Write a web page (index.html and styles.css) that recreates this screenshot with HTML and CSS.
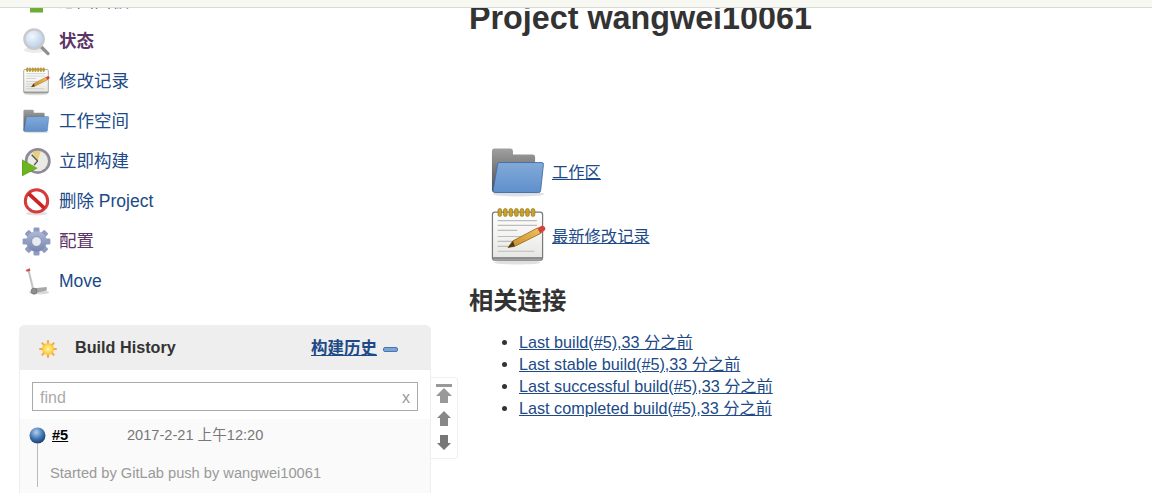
FILE: index.html
```html
<!DOCTYPE html>
<html lang="zh-CN">
<head>
<meta charset="utf-8">
<title>Project wangwei10061</title>
<link rel="stylesheet" href="styles.css">
</head>
<body>
<svg class="defs" width="0" height="0" aria-hidden="true">
  <defs>
    <linearGradient id="gFolderBack" x1="0" y1="0" x2="0" y2="1"><stop offset="0" stop-color="#a0a0a0"/><stop offset="1" stop-color="#4a4a4a"/></linearGradient>
    <linearGradient id="gFolderFront" x1="0" y1="0" x2="0" y2="1"><stop offset="0" stop-color="#82aad8"/><stop offset="1" stop-color="#5f8fcb"/></linearGradient>
    <linearGradient id="gPaper" x1="0" y1="0" x2="0" y2="1"><stop offset="0" stop-color="#ffffff"/><stop offset="1" stop-color="#e6e6e2"/></linearGradient>
    <linearGradient id="gPencil" x1="0" y1="1" x2="1" y2="0"><stop offset="0" stop-color="#c8892a"/><stop offset="1" stop-color="#f0c25a"/></linearGradient>
    <radialGradient id="gLens" cx=".4" cy=".35" r=".7"><stop offset="0" stop-color="#f2f7fd"/><stop offset="1" stop-color="#b3cce8"/></radialGradient>
    <radialGradient id="gBall" cx=".42" cy=".3" r=".75"><stop offset="0" stop-color="#b6d0ec"/><stop offset=".55" stop-color="#3f74b3"/><stop offset="1" stop-color="#17375f"/></radialGradient>
    <radialGradient id="gSun" cx=".5" cy=".5" r=".5"><stop offset="0" stop-color="#fff7a8"/><stop offset="1" stop-color="#f8c431"/></radialGradient>
    <linearGradient id="gGear" x1="0" y1="0" x2="0" y2="1"><stop offset="0" stop-color="#aeb8d6"/><stop offset="1" stop-color="#7785ad"/></linearGradient>
    <symbol id="i-folder" viewBox="0 0 48 48">
      <ellipse cx="24" cy="41.500" rx="21" ry="2" fill="#000" opacity=".12"/>
      <path d="M2.400 6.500q0-2 2-2h13q2 0 2.100 2v2.900h16q2 0 2 2V40.300H4.400q-2 0-2-2z" fill="url(#gFolderBack)"/>
      <path d="M8.300 15.900H43q1.500 0 1.300 1.500L42 38.800q-.2 1.500-1.700 1.500H5q-1.800 0-1.700-1.500L7 17.400q.2-1.500 1.300-1.500z" fill="url(#gFolderFront)" stroke="#3f6ca8" stroke-width=".7"/>
    </symbol>
    <symbol id="i-notes" viewBox="0 0 48 48">
      <ellipse cx="23" cy="45" rx="19" ry="1.800" fill="#000" opacity=".12"/>
      <rect x="2.800" y="4.200" width="40.800" height="39" rx="2" fill="url(#gPaper)" stroke="#7a7a7a" stroke-width="1"/>
      <path d="M3.300 41.700h39.800" stroke="#8d8d8d" stroke-width="2"/>
      <path d="M7 11h32M7 15h32M7 19h16M7 24h28M7 28h20M7 32h14M7 36h30" stroke="#bdbdbd" stroke-width="1"/>
      <g fill="#c9a227" stroke="#8a7118" stroke-width=".5"><rect x="7.300" y="1.200" width="3" height="6.500" rx="1.500"/><rect x="11.800" y="1.200" width="3" height="6.500" rx="1.500"/><rect x="16.300" y="1.200" width="3" height="6.500" rx="1.500"/><rect x="20.800" y="1.200" width="3" height="6.500" rx="1.500"/><rect x="25.300" y="1.200" width="3" height="6.500" rx="1.500"/><rect x="29.800" y="1.200" width="3" height="6.500" rx="1.500"/><rect x="34.300" y="1.200" width="3" height="6.500" rx="1.500"/></g>
      <path d="M15.500 33l4-5.500L39.500 17l2.500 4.500L21 32z" fill="url(#gPencil)" stroke="#8a5f17" stroke-width=".6"/>
      <path d="M15.500 33l4-5.500L21 32z" fill="#4c3a1c"/>
      <path d="M39.500 17l3-1.500q2-.8 3 1t-.8 3l-2.700 2z" fill="#d8403a"/>
    </symbol>
    <symbol id="i-search" viewBox="0 0 48 48">
      <ellipse cx="21" cy="38" rx="18" ry="5" fill="#000" opacity=".08"/>
      <path d="M30 31l13 13" stroke="#8f8f8f" stroke-width="5.500" stroke-linecap="round"/>
      <circle cx="20" cy="20" r="16" fill="url(#gLens)" stroke="#c7c9cc" stroke-width="4"/>
    </symbol>
    <symbol id="i-clock" viewBox="0 0 48 48">
      <circle cx="26" cy="23" r="21.500" fill="#8d8a9a"/>
      <circle cx="26" cy="23" r="17" fill="#ecebe3"/>
      <path d="M26 23L17 9a17 17 0 0 1 14-2z" fill="#e9cf7a"/>
      <path d="M26 23L16 13M26 23l-6 7" stroke="#555" stroke-width="2.400"/>
      <path d="M0 21l25 14L0 48z" fill="#6cb51f" stroke="#4a8a12" stroke-width=".8"/>
    </symbol>
    <symbol id="i-stop" viewBox="0 0 48 48">
      <ellipse cx="24" cy="44" rx="18" ry="3" fill="#000" opacity=".12"/>
      <circle cx="24" cy="23" r="18.500" fill="#fff" stroke="#d63a3a" stroke-width="5"/>
      <path d="M11 11l26 24" stroke="#cc2222" stroke-width="6"/>
    </symbol>
    <symbol id="i-gear" viewBox="0 0 48 48">
      <g fill="#8f9cc2">
        <rect x="19" y="1" width="10" height="46" rx="2"/>
        <rect x="19" y="1" width="10" height="46" rx="2" transform="rotate(45 24 24)"/>
        <rect x="19" y="1" width="10" height="46" rx="2" transform="rotate(90 24 24)"/>
        <rect x="19" y="1" width="10" height="46" rx="2" transform="rotate(135 24 24)"/>
      </g>
      <circle cx="24" cy="24" r="17" fill="url(#gGear)"/>
      <circle cx="24" cy="24" r="8" fill="#e9ebf2" stroke="#6f7da8" stroke-width="1"/>
    </symbol>
    <symbol id="i-move" viewBox="0 0 48 48">
      <ellipse cx="28" cy="42" rx="17" ry="3" fill="#000" opacity=".15"/>
      <path d="M11 6l8 33" stroke="#c4c4c4" stroke-width="3.500"/>
      <path d="M20 35l21-2v6l-19 4z" fill="#a7a7a7"/>
      <circle cx="20" cy="40" r="5" fill="#8e8e8e" stroke="#666"/>
      <path d="M6 5l7-3 1 4-6 2z" fill="#d05050"/>
    </symbol>
  </defs>
</svg>
<div class="topbar"></div>
<div class="view">
  <aside class="side">
    <nav class="tasks">
      <a class="task" href="#"><span class="back-icon"></span><span class="label">返回面板</span></a>
      <a class="task visited strong" href="#"><svg class="icon"><use href="#i-search"/></svg><span class="label">状态</span></a>
      <a class="task" href="#"><svg class="icon"><use href="#i-notes"/></svg><span class="label">修改记录</span></a>
      <a class="task" href="#"><svg class="icon"><use href="#i-folder"/></svg><span class="label">工作空间</span></a>
      <a class="task" href="#"><svg class="icon"><use href="#i-clock"/></svg><span class="label">立即构建</span></a>
      <a class="task" href="#"><svg class="icon"><use href="#i-stop"/></svg><span class="label">删除 Project</span></a>
      <a class="task visited" href="#"><svg class="icon"><use href="#i-gear"/></svg><span class="label">配置</span></a>
      <a class="task" href="#"><svg class="icon"><use href="#i-move"/></svg><span class="label">Move</span></a>
    </nav>
    <div class="history-wrap">
      <section class="panel">
        <header class="panel-head">
          <svg class="sun" viewBox="0 0 18 18"><g stroke="#f0a848" stroke-width="2" stroke-linecap="round"><path d="M9 1v16M1 9h16M3.300 3.300l11.400 11.400M14.700 3.300L3.300 14.700"/></g><circle cx="9" cy="9" r="6" fill="url(#gSun)"/></svg>
          <span class="panel-title">Build History</span>
          <a class="panel-link" href="#">构建历史</a>
          <span class="collapse"></span>
        </header>
        <div class="search">
          <div class="search-box"><span class="find">find</span><span class="clear">x</span></div>
        </div>
        <div class="build">
          <div class="build-status">
            <svg class="ball" viewBox="0 0 17 17"><circle cx="8.500" cy="8.500" r="8" fill="url(#gBall)"/></svg>
            <span class="stem"></span>
          </div>
          <div class="build-info">
            <div class="build-line"><a class="build-no" href="#">#5</a><span class="build-date">2017-2-21 上午12:20</span></div>
            <div class="build-desc">Started by GitLab push by wangwei10061</div>
          </div>
        </div>
      </section>
      <div class="pager">
        <svg class="pg pg-top" viewBox="0 0 16 19"><path d="M0 0h16v3H0zM8 4l8 8h-4v7H4v-7H0z"/></svg>
        <svg class="pg pg-up" viewBox="0 0 14 15"><path d="M7 0l7 7h-3v8H3V7H0z"/></svg>
        <svg class="pg pg-down" viewBox="0 0 14 15"><path d="M3 0h8v8h3l-7 7-7-7h3z"/></svg>
      </div>
    </div>
  </aside>
  <main class="main">
    <h1 class="title">Project wangwei10061</h1>
    <div class="big-link"><svg class="big-icon"><use href="#i-folder"/></svg><a href="#">工作区</a></div>
    <div class="big-link"><svg class="big-icon"><use href="#i-notes"/></svg><a href="#">最新修改记录</a></div>
    <h2 class="subtitle">相关连接</h2>
    <ul class="links">
      <li><a href="#">Last build(#5),33 分之前</a></li>
      <li><a href="#">Last stable build(#5),33 分之前</a></li>
      <li><a href="#">Last successful build(#5),33 分之前</a></li>
      <li><a href="#">Last completed build(#5),33 分之前</a></li>
    </ul>
  </main>
</div>
</body>
</html>
```

FILE: styles.css
```css
* { box-sizing: border-box; }
html, body { margin: 0; height: 493px; overflow: hidden; background: #fff; }
body {
  display: flex;
  flex-direction: column;
  font-family: "Liberation Sans", "Noto Sans CJK SC", sans-serif;
  color: #333;
}
a { color: #204a87; }
.defs { position: absolute; }
.topbar { position: relative; z-index: 1; height: 8px; flex: none; background: #f6f8f1; border-bottom: 1px solid #d9dbd5; }
.view { flex: 1; display: flex; overflow: hidden; }

.side { width: 468px; flex: none; margin-top: -27px; }
.tasks { display: flex; flex-direction: column; }
.task {
  height: 40px;
  display: flex;
  align-items: center;
  gap: 8px;
  padding-left: 22px;
  font-size: 17.5px;
  line-height: 20px;
  text-decoration: none;
}
.task.visited { color: #5c3566; }
.task.strong { font-weight: 700; }
.icon { width: 29px; height: 29px; flex: none; }
.back-icon { width: 29px; height: 29px; flex: none; background: linear-gradient(#7fbf4a, #6aa82e); clip-path: inset(0 8px 3px 8px); }

.history-wrap { display: flex; align-items: flex-start; margin-top: 24px; padding-left: 19px; }
.panel {
  width: 412px;
  flex: none;
  border: 1px solid #eee;
  border-top: 0;
  border-radius: 6px 6px 0 0;
}
.panel-head {
  height: 45px;
  display: flex;
  align-items: center;
  margin: 0 -1px;
  padding: 0 33px 0 20px;
  background: #eee;
  border-radius: 6px 6px 0 0;
  line-height: 20px;
}
.sun { width: 18px; height: 18px; flex: none; margin-top: 2px; }
.panel-title { margin: 0 0 2px 18px; font-size: 16.2px; font-weight: 700; color: #333; }
.panel-link { margin-left: auto; font-size: 16.5px; font-weight: 700; }
.collapse { width: 15px; height: 5px; margin: 3px 0 0 6px; background: #7fa3d3; border: 1px solid #4a76b0; border-radius: 2px; }
.search { height: 49px; padding: 12px 12px 0; }
.search-box {
  height: 29px;
  display: flex;
  align-items: center;
  justify-content: space-between;
  padding: 2px 7px 0 7px;
  border: 1px solid #aaa;
  font-size: 16px;
  color: #aaa;
}
.clear { color: #999; margin-top: 1px; }
.build { display: flex; height: 80px; padding: 8px 0 0 9px; background: #fafafa; }
.build-status { width: 17px; flex: none; display: flex; flex-direction: column; align-items: center; }
.ball { width: 17px; height: 17px; flex: none; }
.stem { width: 1px; height: 43px; background: #bbb; }
.build-info { margin: -1px 0 0 6px; flex: 1; }
.build-line { display: flex; font-size: 14.6px; line-height: 18px; }
.build-no { width: 75px; font-weight: 700; color: #000; }
.build-date { color: #777; }
.build-desc { margin: 20px 0 0 -2px; font-size: 14.65px; line-height: 18px; color: #999; }

.pager {
  width: 27px;
  height: 82px;
  flex: none;
  margin-top: 52px;
  padding-top: 6px;
  display: flex;
  flex-direction: column;
  align-items: center;
  border: 1px solid #f0f0f0;
  border-left: 0;
  border-radius: 0 4px 4px 0;
}
.pg { flex: none; }
.pg-top { width: 16px; height: 19px; fill: #999; }
.pg-up { width: 14px; height: 15px; margin-top: 8px; fill: #888; }
.pg-down { width: 14px; height: 15px; margin-top: 9px; fill: #777; }

.main { flex: 1; margin-top: -10px; font-size: 16.2px; }
.title { margin: 0 0 102px 1px; font-size: 32.3px; line-height: 40px; font-weight: 700; color: #333; }
.big-link { height: 64px; display: flex; align-items: center; gap: 4px; margin-left: 21px; line-height: 20px; font-size: 16.3px; }
.big-icon { width: 59px; height: 59px; flex: none; }
.subtitle { margin: 15px 0 12px 1px; font-size: 24.3px; line-height: 36px; font-weight: 700; color: #333; }
.links { margin: 0; padding: 0 0 0 51px; }
.links li { height: 22px; line-height: 22px; }
```
